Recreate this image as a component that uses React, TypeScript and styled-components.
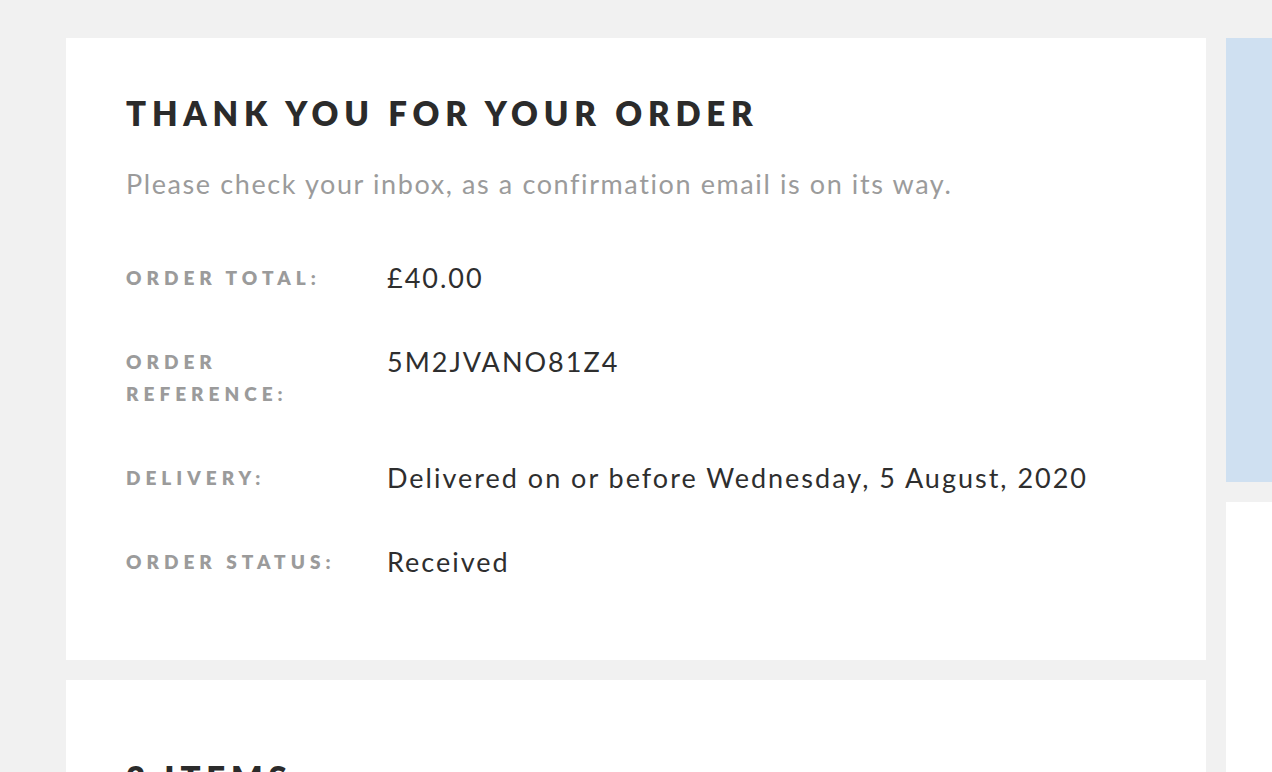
import React from "react";
import styled, { createGlobalStyle } from "styled-components";

const Global = createGlobalStyle`
  html, body { margin: 0; padding: 0; background: #f1f1f1; overflow: hidden; }
  body { font-family: "Lato", "Noto Sans", sans-serif; }
`;

const Page = styled.div`
  display: flex;
  align-items: flex-start;
  gap: 20px;
  padding: 38px 0 0 66px;
  width: 1800px;
  height: 772px;
  box-sizing: border-box;
`;

const MainCol = styled.div`
  width: 1140px;
  display: flex;
  flex-direction: column;
  gap: 20px;
  flex-shrink: 0;
`;

const SideCol = styled.div`
  width: 360px;
  display: flex;
  flex-direction: column;
  gap: 20px;
  flex-shrink: 0;
`;

const Card = styled.section<{ $top: number; $bottom: number }>`
  background: #fff;
  padding: ${(p) => p.$top}px 60px ${(p) => p.$bottom}px;
`;

const Promo = styled.div`
  background: #cfe0f1;
  height: 444px;
  flex-shrink: 0;
`;

const SideCard = styled.div`
  background: #fff;
  height: 300px;
  flex-shrink: 0;
`;

const Heading = styled.h1`
  margin: 0;
  font-size: 33px;
  line-height: 40px;
  font-weight: 800;
  letter-spacing: 5.8px;
  color: #2b2b2b;
  text-transform: uppercase;
`;

const Sub = styled.p`
  margin: 33px 0 0;
  font-size: 27px;
  line-height: 36px;
  font-weight: 400;
  color: #9b9b9b;
  letter-spacing: 1.6px;
`;

const Details = styled.dl`
  margin: 60px 0 0;
  display: grid;
  grid-template-columns: 261px 1fr;
  row-gap: 52px;
`;

const Label = styled.dt`
  font-size: 19px;
  line-height: 32px;
  font-weight: 800;
  letter-spacing: 5px;
  color: #9b9b9b;
  text-transform: uppercase;
  max-width: 220px;
`;

const Value = styled.dd`
  margin: 0;
  font-size: 27px;
  line-height: 32px;
  color: #2e2e2e;
  letter-spacing: 2px;
`;

const rows: [string, string][] = [
  ["Order total:", "£40.00"],
  ["Order reference:", "5M2JVANO81Z4"],
  ["Delivery:", "Delivered on or before Wednesday, 5 August, 2020"],
  ["Order status:", "Received"],
];

export default function App() {
  return (
    <>
      <Global />
      <Page>
        <MainCol>
          <Card $top={55} $bottom={82}>
            <Heading>Thank you for your order</Heading>
            <Sub>Please check your inbox, as a confirmation email is on its way.</Sub>
            <Details>
              {rows.map(([l, v]) => (
                <React.Fragment key={l}>
                  <Label>{l}</Label>
                  <Value>{v}</Value>
                </React.Fragment>
              ))}
            </Details>
          </Card>
          <Card $top={78} $bottom={40}>
            <Heading>2 Items</Heading>
          </Card>
        </MainCol>
        <SideCol>
          <Promo />
          <SideCard />
        </SideCol>
      </Page>
    </>
  );
}
